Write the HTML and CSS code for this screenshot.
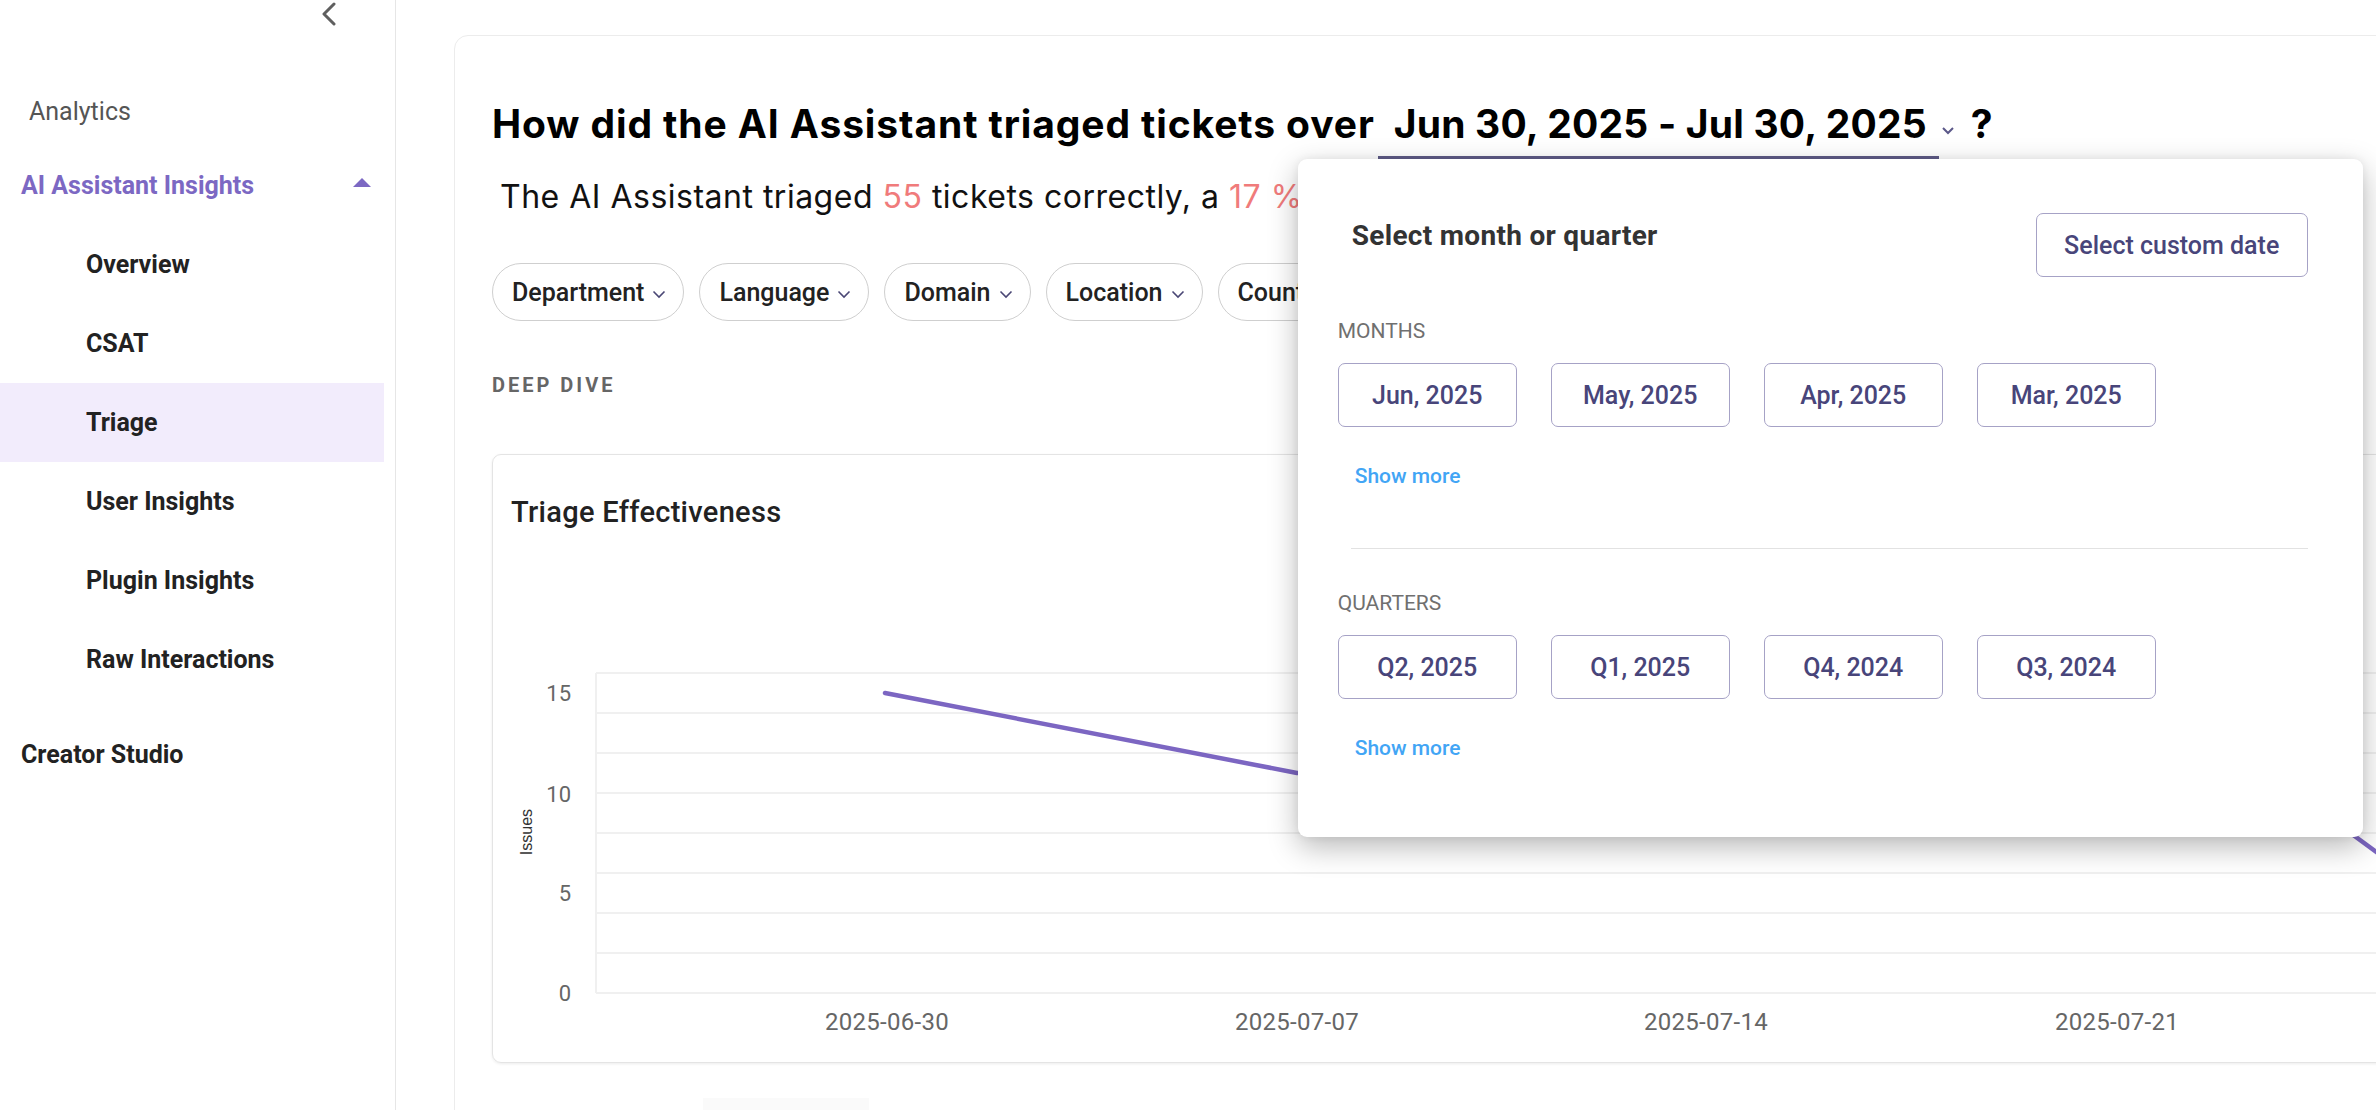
FILE: index.html
```html
<!DOCTYPE html>
<html lang="en">
<head>
  <meta charset="UTF-8"/>
  <title>AI Assistant Insights – Triage</title>
  <link rel="stylesheet" href="styles.css">
</head>
<body>

  <aside class="sidebar">
    <div class="sidebar-top">
      <button class="collapse-btn" aria-label="Collapse sidebar">
        <svg width="16" height="24" viewBox="0 0 16 24"><polyline points="13,2 3,12 13,22" fill="none" stroke="#5f5f5f" stroke-width="3" stroke-linecap="round" stroke-linejoin="round"/></svg>
      </button>
    </div>

    <div class="nav-heading">Analytics</div>

    <div class="nav-group">
      <div class="nav-group-title active">AI Assistant Insights <span class="caret-up"></span></div>
      <a href="#" class="nav-item">Overview</a>
      <a href="#" class="nav-item">CSAT</a>
      <a href="#" class="nav-item selected">Triage</a>
      <a href="#" class="nav-item">User Insights</a>
      <a href="#" class="nav-item">Plugin Insights</a>
      <a href="#" class="nav-item">Raw Interactions</a>
    </div>

    <div class="nav-group-title studio">Creator Studio</div>
  </aside>

  <main class="content">
    <section class="report-card">

      <!-- question + date range picker -->
      <h1 class="question">How did the AI Assistant triaged tickets over<span class="range">
          <button class="range-trigger">Jun 30, 2025 - Jul 30, 2025</button>
          <svg class="range-caret" width="14" height="9" viewBox="0 0 14 9"><polyline points="2,2 7,7 12,2" fill="none" stroke="#5b5889" stroke-width="2"/></svg>

          <div class="range-menu">
            <div class="menu-head">
              <h3>Select month or quarter</h3>
              <button class="outline-btn custom-btn">Select custom date</button>
            </div>

            <div class="menu-label">MONTHS</div>
            <div class="period-row">
              <button class="outline-btn period">Jun, 2025</button>
              <button class="outline-btn period">May, 2025</button>
              <button class="outline-btn period">Apr, 2025</button>
              <button class="outline-btn period">Mar, 2025</button>
            </div>
            <a href="#" class="show-more">Show more</a>

            <hr class="menu-divider"/>

            <div class="menu-label quarters">QUARTERS</div>
            <div class="period-row">
              <button class="outline-btn period">Q2, 2025</button>
              <button class="outline-btn period">Q1, 2025</button>
              <button class="outline-btn period">Q4, 2024</button>
              <button class="outline-btn period">Q3, 2024</button>
            </div>
            <a href="#" class="show-more">Show more</a>
          </div>
        </span><span class="qmark">?</span></h1>

      <p class="summary">The AI Assistant triaged <span class="hl">55</span> tickets correctly, a <span class="hl">17 %</span> improvement over the previous period.</p>

      <div class="filters">
        <button class="pill">Department <svg width="14" height="9" viewBox="0 0 14 9"><polyline points="1.5,1.5 7,7 12.5,1.5" fill="none" stroke="#4a4775" stroke-width="1.6"/></svg></button>
        <button class="pill">Language <svg width="14" height="9" viewBox="0 0 14 9"><polyline points="1.5,1.5 7,7 12.5,1.5" fill="none" stroke="#4a4775" stroke-width="1.6"/></svg></button>
        <button class="pill">Domain <svg width="14" height="9" viewBox="0 0 14 9"><polyline points="1.5,1.5 7,7 12.5,1.5" fill="none" stroke="#4a4775" stroke-width="1.6"/></svg></button>
        <button class="pill">Location <svg width="14" height="9" viewBox="0 0 14 9"><polyline points="1.5,1.5 7,7 12.5,1.5" fill="none" stroke="#4a4775" stroke-width="1.6"/></svg></button>
        <button class="pill">Country <svg width="14" height="9" viewBox="0 0 14 9"><polyline points="1.5,1.5 7,7 12.5,1.5" fill="none" stroke="#4a4775" stroke-width="1.6"/></svg></button>
        <button class="pill">Channel <svg width="14" height="9" viewBox="0 0 14 9"><polyline points="1.5,1.5 7,7 12.5,1.5" fill="none" stroke="#4a4775" stroke-width="1.6"/></svg></button>
      </div>

      <div class="section-label">DEEP DIVE</div>

      <!-- chart -->
      <div class="chart-card">
        <h2>Triage Effectiveness</h2>
        <svg class="chart" width="1900" height="522" viewBox="0 0 1900 522">
          <g stroke="#f0f0f0" stroke-width="2">
            <line x1="103" y1="133" x2="1900" y2="133"/>
            <line x1="103" y1="173" x2="1900" y2="173"/>
            <line x1="103" y1="213" x2="1900" y2="213"/>
            <line x1="103" y1="253" x2="1900" y2="253"/>
            <line x1="103" y1="293" x2="1900" y2="293"/>
            <line x1="103" y1="333" x2="1900" y2="333"/>
            <line x1="103" y1="373" x2="1900" y2="373"/>
            <line x1="103" y1="413" x2="1900" y2="413"/>
            <line x1="103" y1="453" x2="1900" y2="453"/>
            <line x1="103" y1="133" x2="103" y2="453"/>
          </g>
          <g class="axis-y" text-anchor="end">
            <text x="78" y="153">15</text>
            <text x="78" y="254">10</text>
            <text x="78" y="353">5</text>
            <text x="78" y="453">0</text>
          </g>
          <text class="axis-title" transform="rotate(-90 33 292)" x="33" y="292" text-anchor="middle">Issues</text>
          <g class="axis-x" text-anchor="middle">
            <text x="394" y="482">2025-06-30</text>
            <text x="804" y="482">2025-07-07</text>
            <text x="1213" y="482">2025-07-14</text>
            <text x="1624" y="482">2025-07-21</text>
          </g>
          <polyline points="392,153 804,233 1213,213 1624,173 1837,278 1927,344" fill="none" stroke="#7c66c2" stroke-width="4.5" stroke-linejoin="round" stroke-linecap="round"/>
        </svg>
      </div>

      <div class="skeleton"></div>
    </section>
  </main>

</body>
</html>
```

FILE: styles.css
```css
:root {
  --purple:       #7c68c3;
  --purple-dark:  #48457a;
  --purple-line:  #5f5b87;
  --purple-soft:  #f2ecfc;
  --btn-border:   #a6a2c6;
  --text:         #222222;
  --muted:        #666666;
  --coral:        #f07b7b;
  --link:         #42a5f5;
  --line:         #e6e6e6;
}
* { margin:0; padding:0; box-sizing:border-box; }
html, body {
  height:100%; overflow:hidden;
  background:#fff; color:var(--text);
  font-family:Roboto, 'Noto Sans', sans-serif;
}
body { display:flex; }
button { font-family:inherit; background:none; border:none; cursor:pointer; }
a { text-decoration:none; }

/* ─── SIDEBAR ─────────────────────── */
.sidebar {
  flex:none; width:396px; height:100%;
  border-right:1px solid var(--line);
  padding-right:11px;
}
.sidebar-top { height:87px; padding:2px 0 0 321px; }
.collapse-btn { display:block; line-height:0; }

.nav-heading {
  line-height:50px; margin-bottom:9px;
  padding-left:29px;
  font-size:25px; color:#555;
}
.nav-group-title {
  display:flex; align-items:center; justify-content:space-between;
  height:79px; padding:0 13px 0 21px;
  font-size:25px; font-weight:700; color:var(--text);
}
.nav-group-title.active { color:var(--purple); }
.nav-group-title.studio { margin-top:16px; }
.caret-up {
  width:0; height:0; margin-top:-6px;
  border-left:9px solid transparent;
  border-right:9px solid transparent;
  border-bottom:9px solid var(--purple);
}
.nav-item {
  display:block; height:79px; line-height:79px;
  padding-left:86px;
  font-size:25px; font-weight:700; color:var(--text);
}
.nav-item.selected { background:var(--purple-soft); }

/* ─── MAIN CARD ───────────────────── */
.content {
  flex:1; min-width:0; overflow:hidden;
  padding:35px 0 0 58px;
}
.report-card {
  width:2100px; min-height:1200px;
  border:1px solid #ececec; border-radius:14px;
  padding:60px 0 0 37px;
}

.question {
  white-space:nowrap;
  font-family:Inter, 'Liberation Sans', sans-serif;
  font-size:39px; font-weight:700; color:#000;
  line-height:56px; letter-spacing:0.9px;
}
.range {
  position:relative;
  display:inline-flex; align-items:center;
  margin-left:3px;
}
.range-trigger {
  font:inherit; color:#000; letter-spacing:0.2px;
  line-height:56px;
  padding:0 12px 4px 16px;
  border-bottom:3px solid var(--purple-line);
}
.range-caret { margin:6px 0 0 2px; }
.qmark { margin-left:16px; }

/* ─── DATE MENU ───────────────────── */
.range-menu {
  position:absolute; top:100%; left:-80px; z-index:10;
  width:1065px; height:678px;
  padding:54px 55px 0 40px;
  background:#fff; border-radius:9px;
  box-shadow:0 10px 30px rgba(0,0,0,0.28), 0 0 8px rgba(0,0,0,0.06);
  font-family:Roboto, sans-serif; letter-spacing:0;
  white-space:normal; cursor:default;
}
.menu-head {
  display:flex; justify-content:space-between; align-items:flex-start;
}
.menu-head h3 {
  margin:7px 0 0 14px;
  font-size:28px; line-height:32px; font-weight:700; color:#333;
  letter-spacing:0.3px;
}
.outline-btn {
  height:64px;
  border:1px solid var(--btn-border); border-radius:7px;
  background:#fff; color:var(--purple-dark);
  font-size:25px; font-weight:500;
}
.custom-btn { width:272px; }
.menu-label {
  margin-top:42px;
  font-size:21px; line-height:24px; font-weight:400; color:#707070;
}
.period-row { display:flex; gap:34px; margin-top:20px; }
.period { width:179px; }
.show-more {
  display:block; margin:37px 0 0 17px;
  font-size:21px; line-height:24px; font-weight:500; color:var(--link);
}
.menu-divider {
  border:none; border-top:1px solid #e2e2e2;
  margin:60px 0 0 13px;
}

/* ─── SUMMARY + FILTERS ───────────── */
.summary {
  margin-top:18px; padding-left:8px;
  white-space:nowrap;
  font-family:Inter, 'Liberation Sans', sans-serif;
  font-size:32px; line-height:40px; color:#111;
  letter-spacing:0.5px;
}
.summary .hl { color:var(--coral); }

.filters { display:flex; gap:15px; margin-top:46px; }
.pill {
  display:flex; align-items:center; gap:8px;
  height:58px; padding:0 17px 0 19px;
  border:1px solid #cfcfcf; border-radius:29px;
  font-size:25px; font-weight:500; color:var(--text);
}
.pill svg { margin-top:4px; }

.section-label {
  margin-top:52px;
  font-size:20px; line-height:24px; font-weight:700;
  letter-spacing:3px; color:var(--muted);
}

/* ─── CHART ───────────────────────── */
.chart-card {
  width:2000px; margin-top:57px;
  border:1px solid #e4e4e4; border-radius:9px;
  box-shadow:0 1px 3px rgba(0,0,0,0.08);
  padding-top:40px;
}
.chart-card h2 {
  padding-left:18px;
  font-size:29px; line-height:34px; font-weight:500; color:var(--text);
  letter-spacing:0.3px;
}
.chart { display:block; margin-top:11px; }
.chart text { font-family:Roboto, sans-serif; dominant-baseline:central; }
.axis-y text { font-size:22px; fill:var(--muted); }
.axis-x text { font-size:24px; fill:var(--muted); letter-spacing:0.3px; }
.axis-title { font-family:'Liberation Sans', sans-serif !important; font-size:16px; fill:#333; }

.skeleton {
  width:166px; height:20px;
  margin:35px 0 0 211px;
  background:#fafafa;
}
```
